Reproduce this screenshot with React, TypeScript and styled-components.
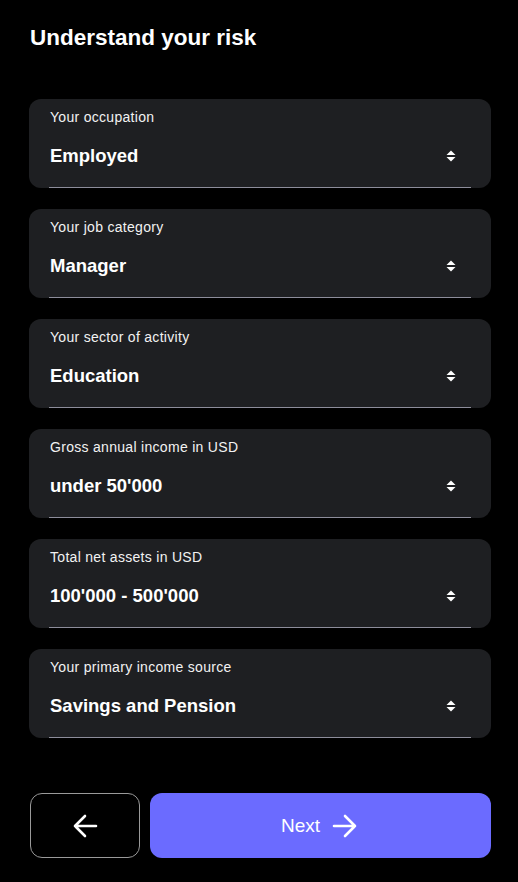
import styled, { createGlobalStyle } from "styled-components"

const fields = [{
    label: 'Your occupation',
    value: 'Employed'
}, {
    label: 'Your job category',
    value: 'Manager'
}, {
    label: 'Your sector of activity',
    value: 'Education'
}, {
    label: 'Gross annual income in USD',
    value: 'under 50\'000'
}, {
    label: 'Total net assets in USD',
    value: '100\'000 - 500\'000'
}, {
    label: 'Your primary income source',
    value: 'Savings and Pension'
}]

const GlobalStyle = createGlobalStyle`
    html, body {
        margin: 0;
        padding: 0;
        background: #000;
    }
    * {
        box-sizing: border-box;
    }
`

const Page = styled.div`
    width: 518px;
    height: 882px;
    background: #000;
    padding: 25px 27px 0 29px;
    display: flex;
    flex-direction: column;
    font-family: "Liberation Sans", Arial, sans-serif;
    color: #fff;
`

const Title = styled.h1`
    margin: 0 0 49px 1px;
    font-size: 22.5px;
    line-height: 25px;
    font-weight: 700;
`

const List = styled.div`
    display: flex;
    flex-direction: column;
    gap: 21px;
`

const Card = styled.div`
    height: 89px;
    background: #1e1f22;
    border-radius: 12px;
    padding: 10px 20px 0 20px;
    display: flex;
    flex-direction: column;
`

const Field = styled.div`
    flex: 1;
    display: flex;
    flex-direction: column;
    border-bottom: 1.5px solid #8d8d9b;
`

const Label = styled.span`
    font-size: 14px;
    letter-spacing: 0.3px;
    line-height: 16px;
    color: #f2f2f2;
    padding-left: 1px;
`

const ValueRow = styled.div`
    margin-top: 20px;
    display: flex;
    align-items: center;
    justify-content: space-between;
    padding-right: 15px;
    padding-left: 1px;
`

const Value = styled.span`
    font-size: 18.5px;
    line-height: 22px;
    font-weight: 700;
`

const Footer = styled.div`
    margin-top: 55px;
    display: flex;
    gap: 10px;
    padding-left: 1px;
`

const BaseButton = styled.button`
    height: 65px;
    border-radius: 12px;
    display: flex;
    align-items: center;
    justify-content: center;
    gap: 12px;
    color: #fff;
    font-family: "Liberation Sans", Arial, sans-serif;
    cursor: pointer;
`

const BackButton = styled(BaseButton)`
    width: 110px;
    background: #000;
    border: 1px solid #9a9a9a;
`

const NextButton = styled(BaseButton)`
    flex: 1;
    background: #6b6bff;
    border: none;
    font-size: 19px;
    font-weight: 500;
    padding-left: 4px;
`

const SelectIcon = () => (
    <svg width="10" height="12" viewBox="0 0 10 12">
        <path d="M5 0.5 L9.5 5 H0.5 Z" fill="#fff" />
        <path d="M5 11.5 L9.5 7 H0.5 Z" fill="#fff" />
    </svg>
)

const ArrowIcon = ({ dir }: { dir: 'left' | 'right' }) => (
    <svg width="26" height="24" viewBox="0 0 26 24" style={{ transform: dir === 'left' ? 'scaleX(-1)' : undefined }}>
        <path d="M2 12 H23 M13 2 L23 12 L13 22" stroke="#fff" strokeWidth="2.6" fill="none" strokeLinecap="round" strokeLinejoin="round" />
    </svg>
)

const App = () => {
    return (
        <Page>
            <GlobalStyle />
            <Title>Understand your risk</Title>
            <List>
                {fields.map(item => (
                    <Card key={item.label}>
                        <Field>
                            <Label>{item.label}</Label>
                            <ValueRow>
                                <Value>{item.value}</Value>
                                <SelectIcon />
                            </ValueRow>
                        </Field>
                    </Card>
                ))}
            </List>
            <Footer>
                <BackButton>
                    <ArrowIcon dir="left" />
                </BackButton>
                <NextButton>
                    Next
                    <ArrowIcon dir="right" />
                </NextButton>
            </Footer>
        </Page>
    )
}

export default App
